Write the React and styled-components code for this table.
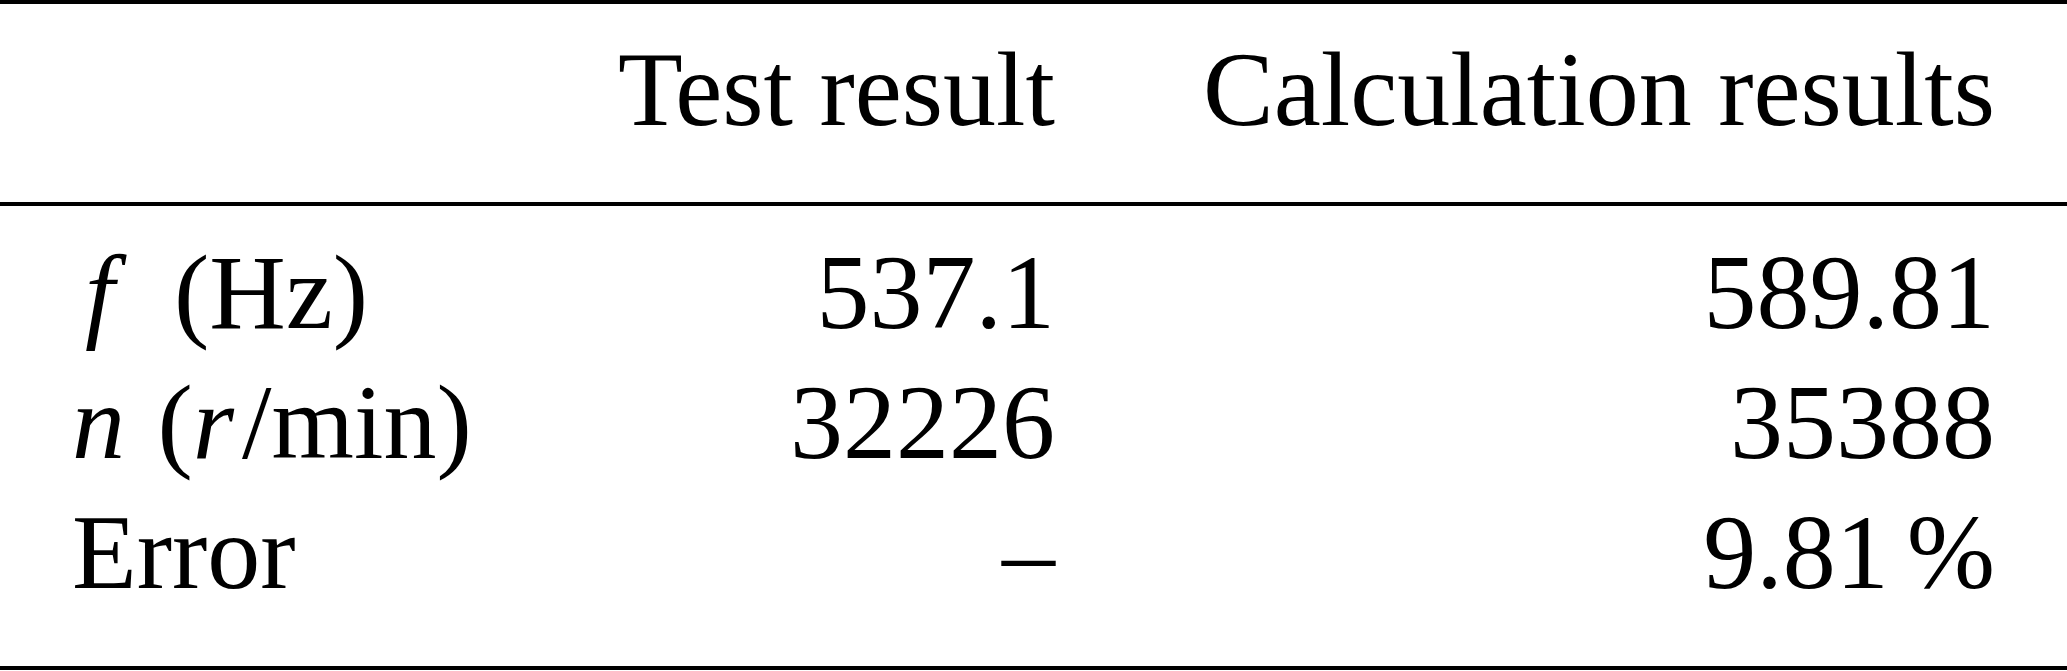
import styled, { createGlobalStyle } from 'styled-components';

const GlobalStyle = createGlobalStyle`
  html, body {
    margin: 0;
    padding: 0;
    background: #fff;
  }
  body {
    font-family: 'Liberation Serif', 'Times New Roman', serif;
    color: #000;
  }
`;

const Table = styled.div`
  width: 2067px;
  border-top: 4px solid #000;
`;

const Head = styled.div`
  padding: 21px 0 47px;
  border-bottom: 4px solid #000;
`;

const Body = styled.div`
  padding: 22px 0 48px;
  border-bottom: 4px solid #000;
`;

const Row = styled.div`
  display: grid;
  grid-template-columns: 500px 483px 940px;
  padding: 0 72px;
  font-size: 106px;
  line-height: 130px;
  white-space: nowrap;
`;

const Cell = styled.div`
  text-align: ${(p) => (p.$right ? 'right' : 'left')};
`;

/* math italic symbols, with a little extra room like TeX's math spacing */
const Var = styled.i`
  font-style: italic;
  margin-left: ${(p) => p.$lead || 0}px;
  margin-right: ${(p) => p.$trail || 0}px;
`;

const Unit = styled.span`
  margin-left: 18px;
`;

const rows = [
  {
    label: (
      <>
        <Var $lead={13} $trail={33}>f</Var> (Hz)
      </>
    ),
    test: '537.1',
    calc: '589.81',
  },
  {
    label: (
      <>
        <Var $trail={6}>n</Var> (<Var $trail={8}>r</Var>/min)
      </>
    ),
    test: '32226',
    calc: '35388',
  },
  {
    label: 'Error',
    test: '–',
    calc: (
      <>
        9.81<Unit>%</Unit>
      </>
    ),
  },
];

export default function App() {
  return (
    <>
      <GlobalStyle />
      <Table>
        <Head>
          <Row>
            <Cell />
            <Cell $right>Test result</Cell>
            <Cell $right>Calculation results</Cell>
          </Row>
        </Head>
        <Body>
          {rows.map((r, i) => (
            <Row key={i}>
              <Cell>{r.label}</Cell>
              <Cell $right>{r.test}</Cell>
              <Cell $right>{r.calc}</Cell>
            </Row>
          ))}
        </Body>
      </Table>
    </>
  );
}
